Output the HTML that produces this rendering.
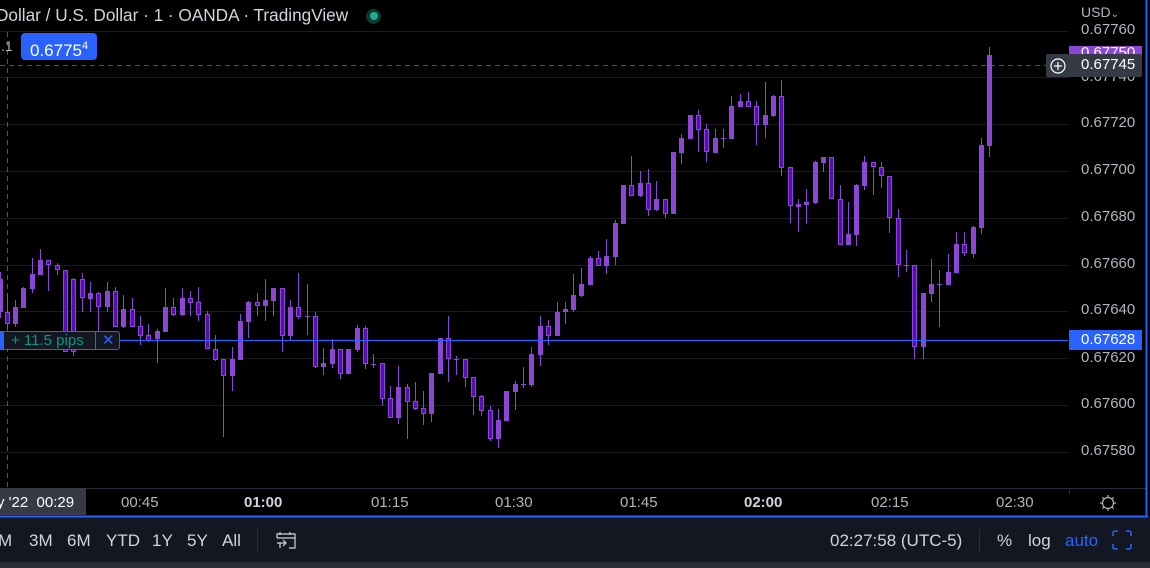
<!DOCTYPE html>
<html><head><meta charset="utf-8"><style>
*{margin:0;padding:0;box-sizing:border-box}
body{width:1150px;height:568px;background:#000;overflow:hidden;position:relative;font-family:"Liberation Sans",sans-serif;color:#d1d4dc}
.abs{position:absolute}
.pl{position:absolute;left:1081px;font-size:15px;color:#b2b5be;line-height:16px}
.tl{position:absolute;top:495px;font-size:15px;color:#b2b5be;line-height:16px}
.tb{position:absolute;top:531px;font-size:17px;color:#d1d4dc;line-height:19px}
</style></head><body>
<svg class="abs" style="left:0;top:0" width="1150" height="568" id="chart">
<g stroke="#1c1c1e" stroke-width="1">
<line x1="0" y1="31.5" x2="1068" y2="31.5"/>
<line x1="0" y1="77.5" x2="1068" y2="77.5"/><line x1="0" y1="124.5" x2="1068" y2="124.5"/>
<line x1="0" y1="171.5" x2="1068" y2="171.5"/><line x1="0" y1="218.5" x2="1068" y2="218.5"/>
<line x1="0" y1="265.5" x2="1068" y2="265.5"/><line x1="0" y1="311.5" x2="1068" y2="311.5"/>
<line x1="0" y1="358.5" x2="1068" y2="358.5"/><line x1="0" y1="405.5" x2="1068" y2="405.5"/>
<line x1="0" y1="452.5" x2="1068" y2="452.5"/>
</g>
<line x1="0" y1="488.5" x2="1146" y2="488.5" stroke="#2a2e39"/>
<line x1="1069.5" y1="488" x2="1069.5" y2="494" stroke="#2a2e39"/>
<line x1="7.5" y1="32" x2="7.5" y2="488" stroke="#555" stroke-dasharray="5,4"/>
<line x1="0" y1="65.5" x2="1046" y2="65.5" stroke="#555" stroke-dasharray="5,4"/>
<g id="candles"></g>
<line x1="0" y1="340.5" x2="1068" y2="340.5" stroke="#2962ff" stroke-width="1.3"/>
<rect x="0" y="516" width="1150" height="46" fill="#131722"/>
<rect x="0" y="562" width="1150" height="6" fill="#2a2e39"/>
<line x1="0" y1="516.5" x2="1148" y2="516.5" stroke="#2962ff" stroke-width="2"/>
<line x1="1146.5" y1="0" x2="1146.5" y2="517" stroke="#2962ff" stroke-width="2"/>
</svg>
<script>
var d=[[0,279,312,272,318,1],[7,312,324,293,330,0],[15,307,324,300,327,1],[23,288,308,287,308,1],[32,274,289,258,293,1],[40,260,275,249,275,1],[48,260,265,260,291,0],[57,265,270,263,275,0],[65,270,352,270,352,0],[73,279,352,278,356,0],[82,279,298,273,312,0],[90,293,299,282,312,1],[98,293,307,292,332,0],[107,291,307,282,312,1],[115,291,327,287,327,0],[123,309,327,295,328,1],[132,309,327,298,327,0],[140,326,336,316,345,0],[148,335,341,324,342,0],[157,331,339,329,363,1],[165,307,332,288,332,1],[173,307,315,298,316,0],[182,298,315,288,316,1],[190,298,303,291,316,0],[198,302,315,287,321,0],[207,314,349,311,349,0],[215,349,360,335,361,0],[223,359,376,359,437,0],[232,359,376,347,391,1],[240,321,360,314,360,1],[248,302,322,301,338,1],[257,302,306,293,316,0],[265,300,306,279,321,1],[273,288,301,288,316,1],[282,288,336,288,352,0],[290,307,336,300,340,1],[298,307,317,273,319,0],[307,316,317,284,335,1],[315,316,367,312,368,0],[323,363,367,348,375,1],[332,349,364,339,368,1],[340,349,374,349,379,0],[348,349,374,349,374,1],[357,328,350,325,352,1],[365,328,364,326,369,0],[373,364,365,354,368,1],[382,363,399,363,406,0],[390,398,418,386,418,0],[398,387,418,366,424,1],[407,387,402,384,439,0],[415,401,409,382,410,0],[423,408,414,391,425,0],[431,373,414,373,422,1],[440,338,374,338,374,1],[448,338,359,316,382,0],[456,359,360,356,375,1],[465,359,378,359,387,0],[473,377,397,377,415,0],[481,396,411,395,416,0],[490,410,439,406,441,0],[498,420,439,409,448,1],[506,391,421,391,421,1],[515,384,392,381,410,1],[523,384,385,367,388,1],[531,354,385,347,387,1],[540,326,355,316,366,1],[548,326,336,320,345,0],[557,312,336,302,336,1],[565,309,312,302,324,1],[573,295,310,274,312,1],[581,284,296,268,297,1],[590,258,285,256,285,1],[598,258,266,251,266,0],[606,256,266,239,274,1],[615,223,257,220,265,1],[623,185,224,185,224,1],[631,185,196,156,196,0],[640,183,196,171,197,1],[648,183,210,169,216,0],[656,199,210,181,211,1],[665,199,214,199,218,0],[673,152,214,152,214,1],[681,138,153,134,164,1],[690,115,139,115,139,1],[698,115,130,110,152,0],[706,129,152,124,162,0],[715,138,153,129,153,1],[723,138,139,129,148,1],[731,106,139,96,139,1],[740,101,107,94,107,1],[748,101,107,92,107,0],[756,106,125,101,145,0],[765,115,125,82,138,1],[773,96,116,95,117,1],[781,96,168,80,176,0],[790,167,206,167,223,0],[798,204,207,199,232,1],[806,202,205,189,224,1],[815,162,203,161,204,1],[823,157,163,157,172,1],[831,157,199,157,199,0],[840,199,245,185,245,0],[848,234,245,202,245,1],[856,185,235,184,246,1],[864,162,186,156,190,1],[873,162,167,162,195,0],[881,167,176,162,188,0],[889,176,218,176,233,0],[898,218,265,209,277,0],[906,265,266,250,272,1],[914,265,347,265,359,0],[923,293,347,293,359,1],[931,284,294,259,302,1],[939,284,285,270,327,1],[948,272,285,254,285,1],[956,244,273,232,273,1],[964,244,253,232,256,0],[973,227,254,226,258,1],[981,145,228,138,234,1],[989,55,146,47,157,1]];
var s='',U='#8b47d3',D='#5a0cb6';
d.forEach(function(c){var x=c[0],bt=c[1],bb=c[2];if(bb-bt<1)bb=bt+1;
s+='<line x1="'+(x+0.5)+'" y1="'+c[3]+'" x2="'+(x+0.5)+'" y2="'+c[4]+'" stroke="'+U+'" stroke-width="1"/>';
if(c[5])s+='<rect x="'+(x-2)+'" y="'+bt+'" width="5" height="'+(bb-bt)+'" fill="'+U+'"/>';
else s+='<rect x="'+(x-1.5)+'" y="'+(bt+0.5)+'" width="4" height="'+Math.max(bb-bt-1,1)+'" fill="'+D+'" stroke="'+U+'" stroke-width="1"/>';});
document.getElementById('candles').innerHTML=s;
</script>
<div class="abs" style="top:5px;font-size:17.2px;color:#d1d4dc;line-height:20px;left:-4px">Dollar / U.S. Dollar · 1 · OANDA · TradingView</div>
<div class="abs" style="left:366px;top:9px;width:15px;height:15px;border-radius:50%;background:#0c3a2c"></div>
<div class="abs" style="left:370px;top:12px;width:8px;height:8px;border-radius:50%;background:#22ab94"></div>
<div class="abs" style="left:1px;top:38px;font-size:14px;color:#b2b5be">.1</div>
<div class="abs" style="left:21px;top:33px;width:76px;height:27px;background:#2962ff;border-radius:4px;color:#fff;font-size:17px;line-height:27px;padding-left:9px">0.6775<sup style="font-size:11px;vertical-align:7px">4</sup></div>

<div class="pl" style="top:4px;left:1081px;font-size:14px">USD<span style="font-size:10px">⌄</span></div>
<div class="pl" style="top:22px">0.67760</div>
<div class="abs" style="left:1069px;top:46px;width:73px;height:14px;background:#8b47d3;overflow:hidden"><div style="position:absolute;left:12px;top:-1px;font-size:15px;color:#fff;line-height:16px">0.67750</div></div>
<div class="abs" style="left:1046px;top:54px;width:96px;height:23px;background:#363a45;border-radius:2px"></div>
<div class="pl" style="top:57px;color:#fff">0.67745</div>
<svg class="abs" style="left:1049px;top:57px" width="18" height="18"><circle cx="9" cy="9" r="7" fill="none" stroke="#fff" stroke-width="1.2"/><path d="M9 5v8M5 9h8" stroke="#fff" stroke-width="1.2"/></svg>
<div class="pl" style="top:69px;clip-path:inset(8px 0 0 0)">0.67740</div>
<div class="pl" style="top:115px">0.67720</div>
<div class="pl" style="top:162px">0.67700</div>
<div class="pl" style="top:209px">0.67680</div>
<div class="pl" style="top:256px">0.67660</div>
<div class="pl" style="top:302px">0.67640</div>
<div class="abs" style="left:1069px;top:330px;width:73px;height:20px;background:#2962ff"></div>
<div class="pl" style="top:332px;color:#fff">0.67628</div>
<div class="pl" style="top:350px">0.67620</div>
<div class="pl" style="top:396px">0.67600</div>
<div class="pl" style="top:443px">0.67580</div>

<div class="abs" style="left:0;top:331px;width:3px;height:19px;background:#2962ff"></div>
<div class="abs" style="left:3px;top:331px;width:117px;height:19px;border:1px solid #2962ff;border-radius:0 3px 3px 0;background:#131722"></div>
<div class="abs" style="left:95px;top:332px;width:1px;height:17px;background:#2962ff"></div>
<div class="abs" style="left:11px;top:332px;font-size:15px;color:#089981;line-height:17px">+ 11.5 pips</div>
<div class="abs" style="left:102px;top:332px;font-size:15px;color:#2962ff;line-height:17px">✕</div>

<div class="abs" style="left:0;top:488px;width:86px;height:27px;background:#363a45"></div>
<div class="tl" style="left:-3px;color:#fff">y '22&nbsp; 00:29</div>
<div class="tl" style="left:121px">00:45</div>
<div class="tl" style="left:244px;font-weight:bold;color:#d1d4dc">01:00</div>
<div class="tl" style="left:371px">01:15</div>
<div class="tl" style="left:495px">01:30</div>
<div class="tl" style="left:620px">01:45</div>
<div class="tl" style="left:744px;font-weight:bold;color:#d1d4dc">02:00</div>
<div class="tl" style="left:871px">02:15</div>
<div class="tl" style="left:996px">02:30</div>
<svg class="abs" style="left:1099px;top:494px" width="18" height="18"><circle cx="9" cy="9" r="5.5" fill="none" stroke="#b2b5be" stroke-width="1.2"/><path d="M9 1v2M9 15v2M1 9h2M15 9h2M3.3 3.3l1.4 1.4M13.3 13.3l1.4 1.4M3.3 14.7l1.4-1.4M13.3 4.7l1.4-1.4" stroke="#b2b5be" stroke-width="1.2"/></svg>

<div class="tb" style="left:-2px">M</div>
<div class="tb" style="left:29px">3M</div>
<div class="tb" style="left:67px">6M</div>
<div class="tb" style="left:106px">YTD</div>
<div class="tb" style="left:152px">1Y</div>
<div class="tb" style="left:187px">5Y</div>
<div class="tb" style="left:222px">All</div>
<div class="abs" style="left:257px;top:529px;width:1px;height:24px;background:#2a2e39"></div>
<svg class="abs" style="left:275px;top:530px" width="22" height="20" fill="none" stroke="#d1d4dc" stroke-width="1.2"><path d="M5 2v3M15 2v3M2 8V4h18v14h-6M2 8h18"/><path d="M2 13h9M8 10l3 3-3 3M5 13v5"/></svg>
<div class="tb" style="left:830px">02:27:58 (UTC-5)</div>
<div class="abs" style="left:979px;top:529px;width:1px;height:24px;background:#2a2e39"></div>
<div class="tb" style="left:997px">%</div>
<div class="tb" style="left:1028px">log</div>
<div class="tb" style="left:1065px;color:#2962ff">auto</div>
<svg class="abs" style="left:1112px;top:530px" width="20" height="20" fill="none" stroke="#2962ff" stroke-width="1.6"><path d="M1 6V3a2 2 0 0 1 2-2h3M14 1h3a2 2 0 0 1 2 2v3M19 14v3a2 2 0 0 1-2 2h-3M6 19H3a2 2 0 0 1-2-2v-3"/></svg>
</body></html>
